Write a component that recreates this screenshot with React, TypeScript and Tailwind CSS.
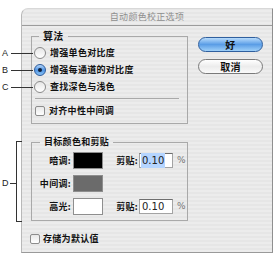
import React from "react";

const font = "font-['Noto_Sans_CJK_SC','Noto_Sans',sans-serif]";

function Radio({ checked = false }: { checked?: boolean }) {
    return checked ? (
        <span className="flex h-[12px] w-[12px] shrink-0 items-center justify-center rounded-full border border-[#2d5b9c] bg-linear-to-b from-[#b5d7fa] via-[#4f94e4] to-[#8ac2f4]">
            <span className="h-[4px] w-[4px] rounded-full bg-[#0e1f3a]" />
        </span>
    ) : (
        <span className="h-[12px] w-[12px] shrink-0 rounded-full border border-[#8a8a8a] bg-linear-to-b from-[#e6e6e6] to-[#ffffff]" />
    );
}

function Check() {
    return <span className="h-[10px] w-[10px] shrink-0 rounded-[2px] border border-[#8c8c8c] bg-linear-to-b from-[#e8e8e8] to-[#ffffff]" />;
}

function RadioRow({ label, checked }: { label: string; checked?: boolean }) {
    return (
        <div className="flex h-[17px] items-center gap-[4px]">
            <Radio checked={checked} />
            <span>{label}</span>
        </div>
    );
}

function ClipInput({ selected = false }: { selected?: boolean }) {
    return (
        <>
            <span className="ml-[9px] w-[26px] text-right">剪贴:</span>
            <span className="ml-[1px] flex h-[15px] w-[34px] items-center border border-[#a3a3a3] border-t-[#6e6e6e] bg-white pl-[1px] font-['DejaVu_Sans',sans-serif] text-[10px] font-normal tracking-normal text-[#222]">
                <span className={selected ? "bg-[#b5d5ff] px-[1px]" : "px-[1px]"}>0.10</span>
            </span>
            <span className="ml-[4px] font-['DejaVu_Sans',sans-serif] text-[9px] font-normal text-[#777]">%</span>
        </>
    );
}

function SwatchRow({ label, color, clip, selected }: { label: string; color: string; clip?: boolean; selected?: boolean }) {
    return (
        <div className="flex h-[17px] items-center">
            <span className="w-[39px] text-right">{label}</span>
            <span className={`ml-[2px] h-[17px] w-[30px] border border-[#8e8e8e] ${color}`} />
            {clip && <ClipInput selected={selected} />}
        </div>
    );
}

export default function App() {
    return (
        <div className={`relative h-[263px] w-[274px] overflow-hidden bg-white text-[9px] font-semibold tracking-[0.3px] text-[#111] ${font}`}>
            <div className="ml-[21px] mt-[8px] flex h-[245px] w-[252px] flex-col rounded-tl-[7px] border border-t-[#d8d8d8] border-l-[#b8b8b8] border-r-[#8f8f8f] border-b-[#9a9a9a] bg-[repeating-linear-gradient(0deg,#ececec_0px,#ececec_2px,#e6e6e6_2px,#e6e6e6_4px)]">
                <div className="flex h-[17px] items-center justify-center border-b border-[#9c9c9c] font-normal text-[#8e8e8e]">
                    自动颜色校正选项
                </div>

                <div className="flex pl-[9px]">
                    <div className="flex w-[157px] flex-col">
                        <fieldset className="mt-[3px] h-[95px] border border-[#a9a9a9]">
                            <legend className="ml-[7px] px-[4px] text-[10px] leading-[14px]">算法</legend>
                            <div className="flex flex-col pl-[2px] pt-[1px]">
                                <RadioRow label="增强单色对比度" />
                                <RadioRow label="增强每通道的对比度" checked />
                                <RadioRow label="查找深色与浅色" />
                                <div className="ml-[1px] mt-[3px] h-px w-[144px] bg-[#a9a9a9]" />
                                <div className="mt-[5px] flex h-[14px] items-center gap-[4px] pl-[1px]">
                                    <Check />
                                    <span>对齐中性中间调</span>
                                </div>
                            </div>
                        </fieldset>

                        <fieldset className="mt-[11px] h-[86px] border border-[#a9a9a9]">
                            <legend className="ml-[8px] px-[4px] leading-[14px]">目标颜色和剪贴</legend>
                            <div className="flex flex-col gap-[6px] pt-[3px]">
                                <SwatchRow label="暗调:" color="bg-black" clip selected />
                                <SwatchRow label="中间调:" color="bg-[#6b6b6b]" />
                                <SwatchRow label="高光:" color="bg-white" clip />
                            </div>
                        </fieldset>

                        <div className="-ml-[1px] mt-[11px] flex h-[14px] items-center gap-[3px]">
                            <Check />
                            <span>存储为默认值</span>
                        </div>
                    </div>

                    <div className="ml-[10px] mt-[11px] flex flex-col gap-[7px]">
                        <button className="flex h-[15px] w-[65px] items-center justify-center rounded-full border border-[#2f5f9e] bg-linear-to-b from-[#b8dbfb] via-[#5a9de6] to-[#9fd0f8] text-[10px] leading-none text-[#111]">
                            好
                        </button>
                        <button className="flex h-[15px] w-[65px] items-center justify-center rounded-full border border-[#7a7a7a] bg-linear-to-b from-[#ffffff] via-[#ececec] to-[#fafafa] text-[10px] leading-none text-[#111]">
                            取消
                        </button>
                    </div>
                </div>
            </div>

            {/* callout labels */}
            {[
                { l: "A", y: "top-[47px]", line: "top-[53px]" },
                { l: "B", y: "top-[64px]", line: "top-[70px]" },
                { l: "C", y: "top-[81px]", line: "top-[87px]" },
            ].map((c) => (
                <React.Fragment key={c.l}>
                    <span className={`absolute left-[2px] ${c.y} font-['Liberation_Sans',sans-serif] text-[9px] font-normal leading-[12px] text-[#222]`}>{c.l}</span>
                    <span className={`absolute left-[11px] ${c.line} h-px w-[22px] bg-[#333]`} />
                </React.Fragment>
            ))}
            <span className="absolute left-[2px] top-[177px] font-['Liberation_Sans',sans-serif] text-[9px] font-normal leading-[12px] text-[#222]">D</span>
            <span className="absolute left-[10px] top-[183px] h-px w-[6px] bg-[#333]" />
            <span className="absolute left-[16px] top-[141px] h-[81px] w-px bg-[#333]" />
            <span className="absolute left-[16px] top-[141px] h-px w-[6px] bg-[#333]" />
            <span className="absolute left-[16px] top-[221px] h-px w-[6px] bg-[#333]" />
        </div>
    );
}
